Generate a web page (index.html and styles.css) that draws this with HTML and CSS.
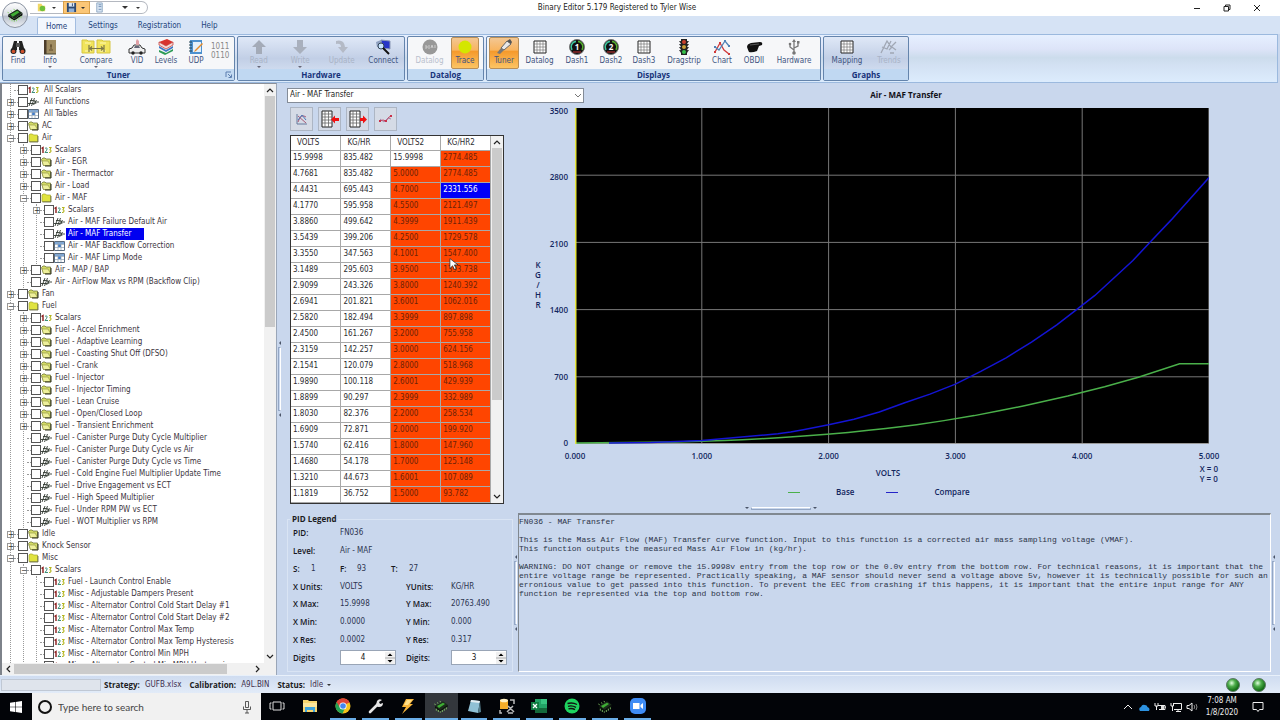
FILE: index.html
```html
<!DOCTYPE html>
<html lang="en">
<head>
<meta charset="utf-8">
<title>Binary Editor</title>
<link rel="stylesheet" href="styles.css">
</head>
<body>
<svg class="defs" aria-hidden="true">
  <defs>
    <linearGradient id="orbFill" x1="0" y1="0" x2="0" y2="1"><stop offset="0" stop-color="#fff"/><stop offset=".5" stop-color="#d9dde4"/><stop offset=".55" stop-color="#b9c0cc"/><stop offset="1" stop-color="#eef1f5"/></linearGradient>
    <radialGradient id="led" cx=".4" cy=".35" r=".6"><stop offset="0" stop-color="#e2ffe0"/><stop offset=".45" stop-color="#4fae4c"/><stop offset="1" stop-color="#0f6a12"/></radialGradient>
  </defs>
  <symbol id="num" viewBox="0 0 11 10"><path d="M.5 3.500L2 2.500v5.500" fill="none" stroke="#8c1c1c" stroke-width="1.4"/><path d="M4 3.500q1-1.500 2.200 0q0 1.500-2.200 4H7" fill="none" stroke="#3f8f7a"/><path d="M8 2.500h2L9 4.800q2.200 1-.2 2.700H8" fill="none" stroke="#b5b51e" stroke-width="1.100"/></symbol>
  <symbol id="fn" viewBox="0 0 11 10"><path d="M1 9L4 1M2 3.500h3M3.500 9l3-8M0 6.500h6M7 5h4M6 3l2 4M5.500 8l3-5" fill="none" stroke="#303830" stroke-width=".9"/></symbol>
  <symbol id="tab" viewBox="0 0 11 10"><path d="M.5.5h10v9H.5z" fill="#fff" stroke="#5a6c80"/><path d="M1 1h9v2H1z" fill="#7fa8d8"/><path d="M4 3h3v3H4z" fill="#3d7cd0"/><path d="M4 1v8M7 1v8M1 3.500h9M1 6.500h9" stroke="#91a3b5" stroke-width=".7"/></symbol>
  <symbol id="dir" viewBox="0 0 11 10"><path d="M.5 2.500L2 1h2l1 1h4.500v6.500h-7z" fill="#d4dc66" stroke="#71763a" stroke-width=".8"/><path d="M1 4h6l2.500 4.500h-7z" fill="#eef09a" stroke="#8c8f42" stroke-width=".6"/><path d="M10 3v6H4" fill="none" stroke="#2b2d18"/></symbol>
  <symbol id="dirx" viewBox="0 0 11 10"><path d="M1 2l1-1h2.500l1 1h4v6.500H1z" fill="#e0e340" stroke="#a5a72c" stroke-width=".7"/><path d="M1.500 9H10V3" fill="none" stroke="#4c4d20" stroke-width=".7"/></symbol>
  <symbol id="chip" viewBox="0 0 24 20"><path d="M3 10L15 3l7 5-11 8z" fill="#1b2e1b"/><path d="M3 10v3l8 5 11-7V8l-11 8z" fill="#0a120a"/><path d="M6 10l9-5 3 2-9 6z" fill="#3fae35"/><path d="M5 14v3m3-1v3m3-1v2m3-4v3m3-5v3m3-5v3M4 8l-2-1m6-1L6 5m6-1l-2-1" stroke="#8fd66d" stroke-width="1.200"/></symbol>
  <symbol id="grid" viewBox="0 0 18 18"><path d="M3 3h12v12H3z" fill="#fff" stroke="#222"/><path d="M6 3v12M9 3v12M12 3v12M3 6h12M3 9h12M3 12h12" stroke="#666" stroke-width=".6"/></symbol>
  <symbol id="dash" viewBox="0 0 18 18"><circle cx="9" cy="9" r="7.500" fill="#111" stroke="#777"/><path d="M4 12A5.500 5.500 0 0 1 8 3.500" fill="none" stroke="#3dc8a0" stroke-width="1.500"/><path d="M10 3.500A5.500 5.500 0 0 1 14 12" fill="none" stroke="#55b030" stroke-width="1.500"/><path d="M5 14h8" stroke="#c33"/></symbol>
  <symbol id="up" viewBox="0 0 8 6"><path d="M1 5l3-3 3 3" fill="none" stroke="#222" stroke-width="1.200"/></symbol>
  <symbol id="down" viewBox="0 0 8 6"><path d="M1 1l3 3 3-3" fill="none" stroke="#222" stroke-width="1.200"/></symbol>
</svg>

<header class="titlebar">
  <button class="orb" aria-label="Application menu"><svg viewBox="0 0 30 30"><circle cx="15" cy="15" r="12.500" fill="url(#orbFill)" stroke="#8a93a2"/><use href="#chip" x="6" y="7" width="18" height="15"/></svg></button>
  <div class="qat">
    <button aria-label="Open"><svg viewBox="0 0 12 12"><path d="M2 2h4l1 2h3v6H2z" fill="#f0d765"/><circle cx="7" cy="7" r="3" fill="#6fc03c"/></svg></button>
    <button class="drop" aria-label="Open options"></button>
    <span class="hot"><button aria-label="Save"><svg viewBox="0 0 12 12"><path d="M1 1h10v10H1z" fill="#2f4a72"/><path d="M3 1h6v4H3z" fill="#dce8f5"/><path d="M3 7h6v4H3z" fill="#8fb0d8"/><path d="M7 1.500v3" stroke="#2f4a72"/></svg></button><button class="drop" aria-label="Save options"></button></span>
    <button class="wide" aria-label="Write"><svg viewBox="0 0 12 12"><path d="M3 1h6v10H3z" fill="#d8e5f3" stroke="#8fa8c4"/><path d="M5 3h3M5 5h3M5 8h3" stroke="#6d8db5"/></svg></button>
    <button class="drop over" aria-label="Customize"></button>
    <button class="drop" aria-label="More"></button>
  </div>
  <h1 class="title">Binary Editor 5.179 Registered to Tyler Wise</h1>
  <div class="win">
    <button aria-label="Minimize"><svg viewBox="0 0 10 10"><path d="M2 5.500h6" stroke="#222"/></svg></button>
    <button aria-label="Restore"><svg viewBox="0 0 10 10"><path d="M2 3.500h4.500V8H2zM3.500 3.500V2H8v4.500H6.500" fill="none" stroke="#222"/></svg></button>
    <button aria-label="Close"><svg viewBox="0 0 10 10"><path d="M2 2l6 6M8 2l-6 6" stroke="#222"/></svg></button>
  </div>
</header>

<nav class="tabs">
  <button class="on">Home</button><button>Settings</button><button>Registration</button><button>Help</button>
</nav>

<div class="ribbon">
  <section class="group g-tuner">
    <div class="items">
      <button><svg viewBox="0 0 18 18"><path d="M3 10l2-7h3v9H2zM15 10l-2-7h-3v9h6z" fill="#222"/><path d="M7 5h4v4H7z" fill="#555"/><circle cx="4.500" cy="13" r="3" fill="#222"/><circle cx="13.500" cy="13" r="3" fill="#222"/><circle cx="4.500" cy="13.500" r="1.800" fill="#d0522c"/><circle cx="13.500" cy="13.500" r="1.800" fill="#d0522c"/></svg>Find</button>
      <button class="menu"><svg viewBox="0 0 18 18"><path d="M3 2h12v14H3z" fill="#a08c62"/><path d="M3 2h2.500v14H3z" fill="#4b3c2a"/><path d="M10 6v5M8 12h4M9 8h2" stroke="#5e4b2c"/><path d="M3 16h12" stroke="#443"/></svg>Info</button>
      <button class="menu"><svg class="big" viewBox="0 0 30 18"><path d="M1 2h5l1 1h6v12H1zM16 2h5l1 1h7v12H16z" fill="#f1e45c" stroke="#d6c643"/><path d="M4 5h6M19 5h6M4 13h6M19 13h6" stroke="#fff8b4"/><path d="M8 7v7M23 7v7M9 10.500h13M11 8.500l-2 2 2 2M20 8.500l2 2-2 2" fill="none" stroke="#7c7848" stroke-width="1.200"/></svg>Compare</button>
      <button><svg viewBox="0 0 18 18"><path d="M1 11l3-1 2-3h6l2 3 3 1v4H1z" fill="#eee" stroke="#333"/><path d="M6 10l1-2h4l1 2z" fill="#667"/><circle cx="5" cy="15" r="1.700" fill="#222"/><circle cx="13" cy="15" r="1.700" fill="#222"/><path d="M9 1l2 2v4H8V3z" fill="#e0a0a6"/></svg>VID</button>
      <button><svg viewBox="0 0 18 18"><path d="M2 4l8-3 6 3-7 4z" fill="#d8342e"/><path d="M2 4v3l7 4 7-4V4L9 8z" fill="#f4dcd8" stroke="#c22b28" stroke-width=".7"/><path d="M2 8v2l7 4 7-4V8l-7 4z" fill="#3d78c4"/><path d="M2 12v2l6 3 8-4v-2l-7 4z" fill="#2b9b56"/></svg>Levels</button>
      <button><svg viewBox="0 0 18 18"><path d="M3 2h12v14H3z" fill="#4d91cf"/><path d="M6 4h8v10H6z" fill="#e4f0fa"/><path d="M2 4h3M2 7h3M2 10h3M2 13h3" stroke="#245"/><path d="M15 5l-7 7-1 2 2-1 7-7z" fill="#e58b2a"/></svg>UDP</button>
      <span class="bits">1011<br>0110</span>
    </div>
    <h2>Tuner</h2><svg class="launch" viewBox="0 0 8 8"><path d="M1 6V1h5M3 3l3 3M6.500 3.500v3h-3" fill="none" stroke="#5d7fb0"/></svg>
  </section>
  <section class="group g-hw blue">
    <div class="items">
      <button class="menu" disabled><svg viewBox="0 0 18 18"><path d="M9 2l7 7h-4v7H6V9H2z" fill="#a4abb8"/></svg>Read</button>
      <button class="menu" disabled><svg viewBox="0 0 18 18"><path d="M9 16l7-7h-4V2H6v7H2z" fill="#a9b0bd"/></svg>Write</button>
      <button disabled><svg viewBox="0 0 18 18"><path d="M3 3q8-2 9 6h3l-5 6-5-6h3q0-4-5-3z" fill="#b4bac6"/></svg>Update</button>
      <button><svg viewBox="0 0 18 18"><path d="M7 2l9 1v8l-8-1z" fill="#2736c8" stroke="#8997b5"/><path d="M2 4l5-2v8l-4-1z" fill="#8ea0c0"/><circle cx="7" cy="8" r="3" fill="#c7e3ff" stroke="#345"/><path d="M9 10l6 6" stroke="#111" stroke-width="2"/></svg>Connect</button>
    </div>
    <h2>Hardware</h2>
  </section>
  <section class="group g-log">
    <div class="items">
      <button disabled><svg viewBox="0 0 18 18"><circle cx="9" cy="9" r="7.500" fill="#989898"/><path d="M4 8h2v2H4m4-3v4m2-1l1-3 1 3m2-3v3" fill="none" stroke="#ccc"/></svg>Datalog</button>
      <button class="on"><svg viewBox="0 0 18 18"><circle cx="9" cy="9" r="6.500" fill="#d4e600"/></svg>Trace</button>
    </div>
    <h2>Datalog</h2>
  </section>
  <section class="group g-disp">
    <div class="items">
      <button class="on"><svg viewBox="0 0 18 18"><path d="M2 15l4-5 3 2-4 4z" fill="#777"/><path d="M6 10l6-7 4 3-7 6z" fill="#e8e8e8" stroke="#666"/><path d="M12 3l3-2 2 3-1 2z" fill="#555"/></svg>Tuner</button>
      <button><svg><use href="#grid"/></svg>Datalog</button>
      <button><svg viewBox="0 0 18 18"><use href="#dash"/><text x="9" y="12" class="digit">1</text></svg>Dash1</button>
      <button><svg viewBox="0 0 18 18"><use href="#dash"/><text x="9" y="12" class="digit">2</text></svg>Dash2</button>
      <button><svg><use href="#grid"/></svg>Dash3</button>
      <button><svg viewBox="0 0 18 18"><path d="M4 3h10l-2 3h2l-2 3h2l-2 3h2l-2 3H6l-2-3h2L4 9h2L4 6h2z" fill="#333"/><path d="M6 1h6v16H6z" fill="#222"/><circle cx="9" cy="4" r="2" fill="#c8402c"/><circle cx="9" cy="9" r="2" fill="#c9a13a"/><circle cx="9" cy="14" r="2" fill="#35c048"/></svg>Dragstrip</button>
      <button><svg viewBox="0 0 18 18"><path d="M2 14L7 5l4 7 5 4" fill="none" stroke="#d03a3a" stroke-width="1.300"/><path d="M2 9l4 3 6-9 4 5" fill="none" stroke="#4f83b8" stroke-width="1.300"/><path d="M1 8h2v2H1zM11 2h2v2h-2zM15 7h2v2h-2z" fill="#4f83b8"/><path d="M6 4h2v2H6zM1 13h2v2H1zM15 15h2v2h-2z" fill="#d03a3a"/></svg>Chart</button>
      <button><svg viewBox="0 0 18 18"><path d="M2 9q0-3 4-4l9-1q3 0 2 3l-3 1-2 5q-5 2-8 1-1-2-2-5z" fill="#111"/><path d="M5 7l9-1" stroke="#555"/></svg>OBDII</button>
      <button><svg viewBox="0 0 18 18"><path d="M9 3v12M9 12L5 9V6M9 10l4-2V5" fill="none" stroke="#777" stroke-width="1.300"/><path d="M9 1L7 4h4z" fill="#777"/><circle cx="9" cy="15" r="1.800" fill="#777"/><path d="M12 3h2.500v2.500H12z" fill="#777"/><circle cx="5" cy="6" r="1.300" fill="#777"/></svg>Hardware</button>
    </div>
    <h2>Displays</h2>
  </section>
  <section class="group g-graph blue">
    <div class="items">
      <button><svg><use href="#grid"/></svg>Mapping</button>
      <button disabled><svg viewBox="0 0 18 18"><path d="M1 15L7 3l4 6 5-5M2 9l5 2 4-8M9 12l3-3 4 3M10 15h4" fill="none" stroke="#a0a7b4" stroke-width="1.300"/></svg>Trends</button>
    </div>
    <h2>Graphs</h2>
  </section>
</div>

<main class="main">
  <aside class="side">
    <div class="treewrap">
      <ul class="tree">
        <li><div class="row root"><i></i><label><input type="checkbox"><svg><use href="#num"/></svg><span>All Scalars</span></label></div></li>
        <li><div class="row root"><button>+</button><label><input type="checkbox"><svg><use href="#fn"/></svg><span>All Functions</span></label></div></li>
        <li><div class="row root"><button>+</button><label><input type="checkbox"><svg><use href="#tab"/></svg><span>All Tables</span></label></div></li>
        <li><div class="row"><button>+</button><label><input type="checkbox"><svg><use href="#dir"/></svg><span>AC</span></label></div></li>
        <li><div class="row"><button>−</button><label><input type="checkbox"><svg><use href="#dirx"/></svg><span>Air</span></label></div>
          <ul>
            <li><div class="row"><button>+</button><label><input type="checkbox"><svg><use href="#num"/></svg><span>Scalars</span></label></div></li>
            <li><div class="row"><button>+</button><label><input type="checkbox"><svg><use href="#dir"/></svg><span>Air - EGR</span></label></div></li>
            <li><div class="row"><button>+</button><label><input type="checkbox"><svg><use href="#dir"/></svg><span>Air - Thermactor</span></label></div></li>
            <li><div class="row"><button>+</button><label><input type="checkbox"><svg><use href="#dir"/></svg><span>Air - Load</span></label></div></li>
            <li><div class="row"><button>−</button><label><input type="checkbox"><svg><use href="#dirx"/></svg><span>Air - MAF</span></label></div>
              <ul>
                <li><div class="row"><button>+</button><label><input type="checkbox"><svg><use href="#num"/></svg><span>Scalars</span></label></div></li>
                <li><div class="row"><i></i><label><input type="checkbox"><svg><use href="#fn"/></svg><span>Air - MAF Failure Default Air</span></label></div></li>
                <li><div class="row sel"><i></i><label><input type="checkbox"><svg><use href="#fn"/></svg><span>Air - MAF Transfer</span></label></div></li>
                <li><div class="row"><i></i><label><input type="checkbox"><svg><use href="#tab"/></svg><span>Air - MAF Backflow Correction</span></label></div></li>
                <li><div class="row"><i></i><label><input type="checkbox"><svg><use href="#tab"/></svg><span>Air - MAF Limp Mode</span></label></div></li>
              </ul>
            </li>
            <li><div class="row"><button>+</button><label><input type="checkbox"><svg><use href="#dir"/></svg><span>Air - MAP / BAP</span></label></div></li>
            <li><div class="row"><i></i><label><input type="checkbox"><svg><use href="#fn"/></svg><span>Air - AirFlow Max vs RPM (Backflow Clip)</span></label></div></li>
          </ul>
        </li>
        <li><div class="row"><button>+</button><label><input type="checkbox"><svg><use href="#dir"/></svg><span>Fan</span></label></div></li>
        <li><div class="row"><button>−</button><label><input type="checkbox"><svg><use href="#dirx"/></svg><span>Fuel</span></label></div>
          <ul>
            <li><div class="row"><button>+</button><label><input type="checkbox"><svg><use href="#num"/></svg><span>Scalars</span></label></div></li>
            <li><div class="row"><button>+</button><label><input type="checkbox"><svg><use href="#dir"/></svg><span>Fuel - Accel Enrichment</span></label></div></li>
            <li><div class="row"><button>+</button><label><input type="checkbox"><svg><use href="#dir"/></svg><span>Fuel - Adaptive Learning</span></label></div></li>
            <li><div class="row"><button>+</button><label><input type="checkbox"><svg><use href="#dir"/></svg><span>Fuel - Coasting Shut Off (DFSO)</span></label></div></li>
            <li><div class="row"><button>+</button><label><input type="checkbox"><svg><use href="#dir"/></svg><span>Fuel - Crank</span></label></div></li>
            <li><div class="row"><button>+</button><label><input type="checkbox"><svg><use href="#dir"/></svg><span>Fuel - Injector</span></label></div></li>
            <li><div class="row"><button>+</button><label><input type="checkbox"><svg><use href="#dir"/></svg><span>Fuel - Injector Timing</span></label></div></li>
            <li><div class="row"><button>+</button><label><input type="checkbox"><svg><use href="#dir"/></svg><span>Fuel - Lean Cruise</span></label></div></li>
            <li><div class="row"><button>+</button><label><input type="checkbox"><svg><use href="#dir"/></svg><span>Fuel - Open/Closed Loop</span></label></div></li>
            <li><div class="row"><button>+</button><label><input type="checkbox"><svg><use href="#dir"/></svg><span>Fuel - Transient Enrichment</span></label></div></li>
            <li><div class="row"><i></i><label><input type="checkbox"><svg><use href="#fn"/></svg><span>Fuel - Canister Purge Duty Cycle Multiplier</span></label></div></li>
            <li><div class="row"><i></i><label><input type="checkbox"><svg><use href="#fn"/></svg><span>Fuel - Canister Purge Duty Cycle vs Air</span></label></div></li>
            <li><div class="row"><i></i><label><input type="checkbox"><svg><use href="#fn"/></svg><span>Fuel - Canister Purge Duty Cycle vs Time</span></label></div></li>
            <li><div class="row"><i></i><label><input type="checkbox"><svg><use href="#fn"/></svg><span>Fuel - Cold Engine Fuel Multiplier Update Time</span></label></div></li>
            <li><div class="row"><i></i><label><input type="checkbox"><svg><use href="#fn"/></svg><span>Fuel - Drive Engagement vs ECT</span></label></div></li>
            <li><div class="row"><i></i><label><input type="checkbox"><svg><use href="#fn"/></svg><span>Fuel - High Speed Multiplier</span></label></div></li>
            <li><div class="row"><i></i><label><input type="checkbox"><svg><use href="#fn"/></svg><span>Fuel - Under RPM PW vs ECT</span></label></div></li>
            <li><div class="row"><i></i><label><input type="checkbox"><svg><use href="#fn"/></svg><span>Fuel - WOT Multiplier vs RPM</span></label></div></li>
          </ul>
        </li>
        <li><div class="row"><button>+</button><label><input type="checkbox"><svg><use href="#dir"/></svg><span>Idle</span></label></div></li>
        <li><div class="row"><button>+</button><label><input type="checkbox"><svg><use href="#dir"/></svg><span>Knock Sensor</span></label></div></li>
        <li><div class="row"><button>−</button><label><input type="checkbox"><svg><use href="#dirx"/></svg><span>Misc</span></label></div>
          <ul>
            <li><div class="row"><button>−</button><label><input type="checkbox"><svg><use href="#num"/></svg><span>Scalars</span></label></div>
              <ul>
                <li><div class="row"><i></i><label><input type="checkbox"><svg><use href="#num"/></svg><span>Fuel - Launch Control Enable</span></label></div></li>
                <li><div class="row"><i></i><label><input type="checkbox"><svg><use href="#num"/></svg><span>Misc - Adjustable Dampers Present</span></label></div></li>
                <li><div class="row"><i></i><label><input type="checkbox"><svg><use href="#num"/></svg><span>Misc - Alternator Control Cold Start Delay #1</span></label></div></li>
                <li><div class="row"><i></i><label><input type="checkbox"><svg><use href="#num"/></svg><span>Misc - Alternator Control Cold Start Delay #2</span></label></div></li>
                <li><div class="row"><i></i><label><input type="checkbox"><svg><use href="#num"/></svg><span>Misc - Alternator Control Max Temp</span></label></div></li>
                <li><div class="row"><i></i><label><input type="checkbox"><svg><use href="#num"/></svg><span>Misc - Alternator Control Max Temp Hysteresis</span></label></div></li>
                <li><div class="row"><i></i><label><input type="checkbox"><svg><use href="#num"/></svg><span>Misc - Alternator Control Min MPH</span></label></div></li>
                <li><div class="row"><i></i><label><input type="checkbox"><svg><use href="#num"/></svg><span>Misc - Alternator Control Min MPH Hysteresis</span></label></div></li>
              </ul>
            </li>
          </ul>
        </li>
      </ul>
      <div class="vbar"><svg><use href="#up"/></svg><b></b><svg class="end"><use href="#down"/></svg></div>
    </div>
    <div class="hbar"><svg viewBox="0 0 6 8"><path d="M5 1L2 4l3 3" fill="none" stroke="#222" stroke-width="1.200"/></svg><b></b><svg viewBox="0 0 6 8"><path d="M1 1l3 3-3 3" fill="none" stroke="#222" stroke-width="1.200"/></svg></div>
  </aside>
  <div class="split v"><span></span></div>

  <div class="content">
    <div class="upper">
      <div class="headline">
        <div class="combo"><select aria-label="Function"><option>Air - MAF Transfer</option></select><svg viewBox="0 0 8 6"><path d="M1 1l3 3 3-3" fill="none" stroke="#777"/></svg></div>
        <h3>Air - MAF Transfer</h3>
      </div>
      <div class="work">
        <div class="editor">
          <div class="tools">
            <button aria-label="Graph"><svg viewBox="0 0 20 18"><path d="M5 4v10h10" fill="none" stroke="#667a9c"/><path d="M6 12q3-9 8-5M6 6l8 7" fill="none" stroke="#a75a76"/><path d="M6 10l4-5 4 5" fill="none" stroke="#4c78b8"/></svg></button>
            <button aria-label="Import column"><svg viewBox="0 0 20 18"><path d="M2 1h10v16H2z" fill="#fff" stroke="#222"/><path d="M5 1v16M8.500 1v16M2 4h10M2 7h10M2 10h10M2 13h10" stroke="#666" stroke-width=".8"/><path d="M11 9.500l4-4v2.500h4v3h-4v2.500z" fill="#f01010"/></svg></button>
            <button aria-label="Export column"><svg viewBox="0 0 20 18"><path d="M2 1h10v16H2z" fill="#fff" stroke="#222"/><path d="M5 1v16M8.500 1v16M2 4h10M2 7h10M2 10h10M2 13h10" stroke="#666" stroke-width=".8"/><path d="M19 9.500l-4-4v2.500h-3v3h3v2.500z" fill="#f01010"/></svg></button>
            <button aria-label="Smooth"><svg viewBox="0 0 20 18"><path d="M4 11l3-1 3 1 3-4 3-1" fill="none" stroke="#c9405c"/><path d="M4 9l4 3 4-4 3 1" fill="none" stroke="#a06a90" stroke-width=".8"/><path d="M3 10h2v2H3zM9 10h2v2H9zM14 5h2v2h-2z" fill="#c9304a"/></svg></button>
          </div>
          <div class="sheet">
            <table>
              <thead><tr><th>VOLTS</th><th>KG/HR</th><th>VOLTS2</th><th>KG/HR2</th></tr></thead>
              <tbody>
                <tr><td>15.9998</td><td>835.482</td><td>15.9998</td><td class="d">2774.485</td></tr>
                <tr><td>4.7681</td><td>835.482</td><td class="d">5.0000</td><td class="d">2774.485</td></tr>
                <tr><td>4.4431</td><td>695.443</td><td class="d">4.7000</td><td class="cur">2331.556</td></tr>
                <tr><td>4.1770</td><td>595.958</td><td class="d">4.5500</td><td class="d">2121.497</td></tr>
                <tr><td>3.8860</td><td>499.642</td><td class="d">4.3999</td><td class="d">1911.439</td></tr>
                <tr><td>3.5439</td><td>399.206</td><td class="d">4.2500</td><td class="d">1729.578</td></tr>
                <tr><td>3.3550</td><td>347.563</td><td class="d">4.1001</td><td class="d">1547.400</td></tr>
                <tr><td>3.1489</td><td>295.603</td><td class="d">3.9500</td><td class="d">1393.738</td></tr>
                <tr><td>2.9099</td><td>243.326</td><td class="d">3.8000</td><td class="d">1240.392</td></tr>
                <tr><td>2.6941</td><td>201.821</td><td class="d">3.6001</td><td class="d">1062.016</td></tr>
                <tr><td>2.5820</td><td>182.494</td><td class="d">3.3999</td><td class="d">897.898</td></tr>
                <tr><td>2.4500</td><td>161.267</td><td class="d">3.2000</td><td class="d">755.958</td></tr>
                <tr><td>2.3159</td><td>142.257</td><td class="d">3.0000</td><td class="d">624.156</td></tr>
                <tr><td>2.1541</td><td>120.079</td><td class="d">2.8000</td><td class="d">518.968</td></tr>
                <tr><td>1.9890</td><td>100.118</td><td class="d">2.6001</td><td class="d">429.939</td></tr>
                <tr><td>1.8899</td><td>90.297</td><td class="d">2.3999</td><td class="d">332.989</td></tr>
                <tr><td>1.8030</td><td>82.376</td><td class="d">2.2000</td><td class="d">258.534</td></tr>
                <tr><td>1.6909</td><td>72.871</td><td class="d">2.0000</td><td class="d">199.920</td></tr>
                <tr><td>1.5740</td><td>62.416</td><td class="d">1.8000</td><td class="d">147.960</td></tr>
                <tr><td>1.4680</td><td>54.178</td><td class="d">1.7000</td><td class="d">125.148</td></tr>
                <tr><td>1.3210</td><td>44.673</td><td class="d">1.6001</td><td class="d">107.089</td></tr>
                <tr><td>1.1819</td><td>36.752</td><td class="d">1.5000</td><td class="d">93.782</td></tr>
              </tbody>
            </table>
            <div class="vbar"><svg><use href="#up"/></svg><b></b><svg class="end"><use href="#down"/></svg></div>
            <svg class="pointer" viewBox="0 0 10 14"><path d="M1 1v11l3-3 2 4 2-1-2-4h4z" fill="#fff" stroke="#222" stroke-width=".8"/></svg>
          </div>
        </div>
        <div class="chart">
          <div class="ytitle">K<br>G<br>/<br>H<br>R</div>
          <div class="yaxis"><span>3500</span><span>2800</span><span>2100</span><span>1400</span><span>700</span><span>0</span></div>
          <svg class="plot" viewBox="0 0 634 335" preserveAspectRatio="none">
            <path class="gridline" d="M126.800 0v335M253.600 0v335M380.400 0v335M507.200 0v335M0 67h634M0 134h634M0 201h634M0 268h634"/>
            <path class="frame" d="M634 0v335M0 334.500h634"/>
            <path class="base" d="M0 334L100 333L150 331.500L167.500 330.700L186 329.800L199.600 329L214.400 328L228.600 327.100L252.200 325.400L273.100 323.500L293.600 321.400L310.700 319.600L327.400 317.500L341.600 315.700L369 311.700L399.300 306.700L425.400 301.700L449.400 296.800L492.700 287.200L529.600 278L563.400 268.400L604.600 255L634 255"/>
            <path class="compare" d="M34 334L76 333.500L127 331.500L190.200 326L202.900 324.800L215.600 323L228.200 320.800L253.600 315.900L279 310.300L304.300 303.100L329.700 293.800L355 285.300L380.400 275.300L405.800 262.600L431.100 249.100L456.500 233.400L481.800 216.300L500.900 201.600L519.900 186.900L538.900 169.500L557.900 152L576.900 131.900L596 111.800L634 69.400"/>
            <path class="yedge" d="M.5 0v335"/>
          </svg>
          <div class="xaxis"><span>0.000</span><span>1.000</span><span>2.000</span><span>3.000</span><span>4.000</span><span>5.000</span></div>
          <div class="foot">
            <div class="xtitle">VOLTS</div>
            <div class="readout">X = 0<br>Y = 0</div>
          </div>
          <div class="legend"><i class="k1"></i><span>Base</span><i class="k2"></i><span>Compare</span></div>
        </div>
      </div>
      <div class="split h"><span></span></div>
    </div>

    <div class="lower">
      <fieldset class="pid">
        <legend>PID Legend</legend>
        <div class="line"><b>PID:</b><span>FN036</span></div>
        <div class="line"><b>Level:</b><span>Air - MAF</span></div>
        <div class="line six"><b>S:</b><span>1</span><b>F:</b><span>93</span><b>T:</b><span>27</span></div>
        <div class="line four"><b>X Units:</b><span>VOLTS</span><b>YUnits:</b><span>KG/HR</span></div>
        <div class="line four"><b>X Max:</b><span>15.9998</span><b>Y Max:</b><span>20763.490</span></div>
        <div class="line four"><b>X Min:</b><span>0.0000</span><b>Y Min:</b><span>0.000</span></div>
        <div class="line four"><b>X Res:</b><span>0.0002</span><b>Y Res:</b><span>0.317</span></div>
        <div class="line four"><label for="xd">Digits</label><div class="spin"><input id="xd" value="4"><button aria-label="Change X digits"><svg viewBox="0 0 10 12"><path d="M5 1.500L7.500 4h-5zM5 10.500L7.500 8h-5z"/><path d="M0 6h10" stroke="#aaa"/></svg></button></div><label for="yd">Digits:</label><div class="spin"><input id="yd" value="3"><button aria-label="Change Y digits"><svg viewBox="0 0 10 12"><path d="M5 1.500L7.500 4h-5zM5 10.500L7.500 8h-5z"/><path d="M0 6h10" stroke="#aaa"/></svg></button></div></div>
      </fieldset>
      <div class="split v"><span></span></div>
      <textarea readonly aria-label="Description">FN036 - MAF Transfer

This is the Mass Air Flow (MAF) Transfer curve function. Input to this function is a corrected air mass sampling voltage (VMAF).
This function outputs the measured Mass Air Flow in (kg/hr).

WARNING: DO NOT change or remove the 15.9998v entry from the top row or the 0.0v entry from the bottom row. For technical reasons, it is important that the entire voltage range be represented. Practically speaking, a MAF sensor should never send a voltage above 5v, however it is technically possible for such an erronious value to get passed into this function. To prevent the EEC from crashing if this happens, it is important that the entire input range for ANY function be represented via the top and bottom row.</textarea>
      <div class="split v"><span></span></div>
    </div>
  </div>
</main>

<footer class="status">
  <div class="progress"></div>
  <b>Strategy:</b><span>GUFB.xlsx</span><b>Calibration:</b><span>A9L.BIN</span><b>Status:</b><button>Idle</button>
  <div class="leds"><svg viewBox="0 0 16 16"><circle cx="8" cy="8" r="6.500" fill="url(#led)" stroke="#5f7a68"/></svg><svg viewBox="0 0 16 16"><circle cx="8" cy="8" r="6.500" fill="url(#led)" stroke="#5f7a68"/></svg></div>
</footer>

<div class="taskbar">
  <button class="start" aria-label="Start"><svg viewBox="0 0 12 12"><path d="M0 1.800l5-.8v4.700H0zM5.600.9L12 0v5.700H5.600zM0 6.300h5V11l-5-.8zM5.600 6.300H12V12l-6.400-.9z" fill="#fff"/></svg></button>
  <div class="search">
    <svg viewBox="0 0 16 16"><circle cx="8" cy="8" r="6" fill="none" stroke="#111" stroke-width="2"/></svg>
    <input placeholder="Type here to search" aria-label="Search">
    <svg viewBox="0 0 16 16"><path d="M6.500 2.500h3v6h-3zM4.500 7.500v3h7v-3M8 11v3M6 14h4" fill="none" stroke="#333" stroke-width=".8"/></svg>
  </div>
  <div class="apps">
    <button aria-label="Task view"><svg viewBox="0 0 16 16"><path d="M4 4h8v8H4zM2.500 5H1v6h1.500M13.500 5H15v6h-1.500" fill="none" stroke="#ddd"/></svg></button>
    <button aria-label="File Explorer"><svg viewBox="0 0 16 16"><path d="M1 2h5l1 1h8v11H1z" fill="#f6d56f"/><path d="M1 5h14v4H1z" fill="#fbe69c"/><path d="M3 9h10v5H11v-2H5v2H3z" fill="#3fa4dc"/></svg></button>
    <button class="run" aria-label="Chrome"><svg viewBox="0 0 16 16"><circle cx="8" cy="8" r="7.500" fill="#f4c21c"/><path d="M8 8L1.500 4.200A7.500 7.500 0 0 1 14.500 4.200z" fill="#de4437"/><path d="M8 8L1.500 4.200A7.500 7.500 0 0 0 7.500 15.500L10 10z" fill="#23a455"/><path d="M8 4.500h6.600a7.500 7.500 0 0 0-13-.5L4.500 9z" fill="#de4437"/><circle cx="8" cy="8" r="3.600" fill="#fff"/><circle cx="8" cy="8" r="2.800" fill="#4385f0"/></svg></button>
    <button class="run" aria-label="Wrench"><svg viewBox="0 0 16 16"><path d="M2 14L10 6" stroke="#e6e6e6" stroke-width="2.600" stroke-linecap="round"/><path d="M9 3q2-3 5-1l-3 2 1 2 3-1q0 4-4 4T9 3z" fill="#e6e6e6"/></svg></button>
    <button class="run" aria-label="Bolt"><svg viewBox="0 0 16 16"><path d="M6 1h8l-4 5h3L2 16l4-7H2z" fill="#f8b63a"/><path d="M7 2h5L8 7H4z" fill="#ffe08a"/></svg></button>
    <button class="run active" aria-label="Binary Editor"><svg><use href="#chip"/></svg></button>
    <button class="run" aria-label="Notepad"><svg viewBox="0 0 16 16"><path d="M5 2l9 1-2 12-10-2z" fill="#8fc0d4"/><path d="M5 2l9 1-.5 2-9-1z" fill="#e4eef2"/><path d="M14 3l1 11-3 1z" fill="#56808f"/></svg></button>
    <button class="run" aria-label="Database"><svg viewBox="0 0 16 16"><path d="M1 2h8v9H1z" fill="#f5ad28"/><ellipse cx="5" cy="2.500" rx="4" ry="1.800" fill="#fff0c0"/><path d="M11 2h4v4M3 15h-2v-3M9 8l6 6M14 8l-6 6M9 15h5" fill="none" stroke="#bbb" stroke-width="1.500"/></svg></button>
    <button class="run" aria-label="Excel"><svg viewBox="0 0 16 16"><path d="M4 1h12v14H4z" fill="#22a366"/><path d="M10 1h6v5h-6z" fill="#38c481"/><path d="M10 10h6v5H4v-5z" fill="#14693b"/><path d="M0 4h8v8H0z" fill="#107c41"/><path d="M2 6l4 4M6 6l-4 4" stroke="#fff" stroke-width="1.300"/></svg></button>
    <button class="run" aria-label="Spotify"><svg viewBox="0 0 16 16"><circle cx="8" cy="8" r="7.500" fill="#1ed45f"/><path d="M3.500 5.500q5-1.500 9.500 1M4 8.300q4-1.200 8 1M4.500 10.800q3.500-1 6.500.8" fill="none" stroke="#111" stroke-width="1.400"/></svg></button>
    <button class="run" aria-label="Binary Editor 2"><svg><use href="#chip"/></svg></button>
    <button class="run" aria-label="Zoom"><svg viewBox="0 0 16 16"><rect width="16" height="16" rx="5" fill="#3f8cf5"/><path d="M3 5h6.500v6H3zM10.500 7L13 5v6l-2.500-2z" fill="#fff"/></svg></button>
  </div>
  <div class="tray">
    <svg viewBox="0 0 12 12"><path d="M2 8l4-4 4 4" fill="none" stroke="#eee"/></svg>
    <svg viewBox="0 0 12 12"><path d="M2 10q-2-3 1-4 1-3 4-2 2 0 2.500 2 3 1 1.500 4z" fill="#2c92e0"/></svg>
    <svg viewBox="0 0 12 12"><path d="M4 4.500h7v4H5M11 6h1v1M1 2v3h3V2M2.500 5v4" fill="none" stroke="#eee"/><path d="M7 5h3v3H7z" fill="#ddd"/></svg>
    <svg viewBox="0 0 12 12"><path d="M4 2.500h7.500v6H4M6 10.500h5M8 8.500v2M1 2v3h2.500V2M2.500 5v5" fill="none" stroke="#eee"/></svg>
    <svg viewBox="0 0 12 12"><path d="M1 4.500h2L6 2v8L3 7.500H1z" fill="none" stroke="#eee"/><path d="M8 4q1.500 2 0 4M10 3q2 3 0 6" fill="none" stroke="#888"/></svg>
    <time>7:08 AM<br>1/8/2020</time>
    <svg viewBox="0 0 12 12"><path d="M1 1.500h10v7H7.500L6 10.500 4.500 8.500H1z" fill="none" stroke="#eee"/></svg>
  </div>
</div>
</body>
</html>
```
FILE: styles.css
```css
* { box-sizing: border-box; }
body {
  margin: 0; height: 100vh; display: flex; flex-direction: column; overflow: hidden;
  background: #c9d7ed; color: #1c1c22;
  font: 8px/12px "DejaVu Sans Condensed", "Open Sans", sans-serif;
}
button, input, select, textarea { font: inherit; color: inherit; margin: 0; padding: 0; }
button { background: none; border: 0; }
h1, h2, h3, ul { margin: 0; padding: 0; font-size: inherit; list-style: none; }
svg { display: block; flex: none; }
.defs { position: absolute; width: 0; height: 0; }
h2, h3, .line b, .line label, .pid legend, .status b, .chart { font-family: "Open Sans", sans-serif; }

/* title bar */
.titlebar { position: relative; height: 16px; flex: none; display: flex; align-items: center; background: #fff; }
.orb { position: absolute; left: 0; top: 0; z-index: 2; }
.orb svg { width: 30px; height: 30px; }
.qat { position: absolute; left: 30px; top: 1px; width: 118px; height: 13px; padding-left: 6px; display: flex; align-items: center; border: 1px solid #b4b8c0; border-left: 0; border-radius: 0 7px 7px 0; }
.qat svg { width: 11px; height: 11px; }
.qat .drop { width: 13px; height: 11px; }
.qat .drop::after, .status button::after { content: ""; display: block; width: 0; margin: 0 auto; border: 2px solid transparent; border-top-color: #333; border-bottom: 0; }
.qat .over::after { border-width: 3px 3px 0; }
.qat .hot { display: flex; align-items: center; height: 13px; width: 27px; margin: 0 4px 0 3px; padding-left: 2px; background: #fbc676; border: 1px solid #d8a04c; }
.qat .wide { width: 24px; }
.title { flex: 1; text-align: center; font-weight: 400; padding-left: 14px; margin-right: -28px; }
.win { display: flex; gap: 20px; padding-right: 12px; width: 88px; }
.win svg { width: 10px; height: 10px; }

/* tabs */
.tabs { height: 18px; flex: none; display: flex; gap: 4px; padding: 1px 0 0 37px; background: #d6e3f5; color: #23437c; line-height: 16px; }
.tabs button { padding: 0 8px; }
.tabs .on { background: #f3f7fd; border: 1px solid #a3bde0; border-bottom: 0; border-radius: 2px 2px 0 0; line-height: 15px; }

/* ribbon */
.ribbon { height: 49px; flex: none; display: flex; gap: 2px; padding: 1px 2px; margin-right: 2px; border: 1px solid #9bb9de; border-width: 1px 1px 1px 0; background: linear-gradient(#e6f0ff, #dde4f8 30%, #ccdcec 48%, #d3e1f3 65%, #dcecfd); }
.group { position: relative; display: flex; flex-direction: column; border: 1px solid #6484ac; border-radius: 2px; background: #f6f7f9; color: #3f5580; }
.group h2 { background: #c3daf2; color: #17337a; text-align: center; font-size: 8px; line-height: 11px; }
.items { flex: 1; display: grid; }
.items button { display: flex; flex-direction: column; align-items: center; padding-top: 1px; line-height: 10px; }
.items svg { width: 18px; height: 18px; }
.items .big { width: 30px; }
.items button:disabled { color: #b9c0cd; }
.items .menu::after { content: ""; border: 2px solid transparent; border-top-color: #667; border-bottom: 0; }
.items .on { background: linear-gradient(#f3c793, #f8b45f 40%, #f59a2c 45%, #fcc464); border: 1px solid #b98f58; border-radius: 2px; padding-top: 0; }
.blue { background: linear-gradient(#dfe8f7, #c2cfe6 50%, #dbe6f6); }
.blue h2 { background: #c0d8f2; }
.blue .items button:disabled { color: #a9b3c6; }
.bits { line-height: 9px; color: #888; padding: 5px 0 0 2px; }
.digit { font: bold 8px "Open Sans", sans-serif; fill: #fff; text-anchor: middle; }
.launch { position: absolute; right: 1px; bottom: 1px; width: 8px; height: 8px; }
.g-tuner { width: 233px; } .g-tuner .items { grid-template-columns: 30px 34px 58px 24px 34px 26px 24px; }
.g-hw { width: 168px; } .g-hw .items { grid-template-columns: repeat(4, 1fr); }
.g-log { width: 77px; } .g-log .items { grid-template-columns: 43px 28px; }
.g-disp { width: 335px; } .g-disp .items { grid-template-columns: 30px 41px 34px 34px 32px 48px 28px 36px 44px; padding-left: 2px; }
.g-graph { width: 86px; } .g-graph .items { grid-template-columns: 46px 38px; }

/* work area */
.main { flex: 1; min-height: 0; display: flex; padding-right: 4px; }
.side { width: 277px; flex: none; display: flex; flex-direction: column; background: #fff; border-left: 2px solid #7d828a; border-right: 1px solid #9aa6b8; border-top: 1px solid #8a8f98; }
.treewrap { flex: 1; min-height: 0; display: flex; overflow: hidden; }
.tree { flex: 1; min-width: 0; margin-left: 8px; }
.tree ul, .tree { border-left: 1px dotted #9a9a9a; }
.tree ul { margin-left: 12px; }
.row { height: 12px; display: flex; align-items: center; white-space: nowrap; color: #3c3540; }
.row button { width: 7px; height: 7px; margin-left: -4px; border: 1px solid #999; background: #fff; font-size: 8px; line-height: 5px; color: #333; flex: none; }
.row i { width: 3px; height: 7px; flex: none; }
.row label { display: flex; align-items: center; height: 12px; }
.row label::before { content: ""; width: 4px; border-top: 1px dotted #9a9a9a; }
.row input { appearance: none; width: 10px; height: 10px; border: 1px solid #555; background: #fff; }
.row svg { width: 11px; height: 10px; }
.row span { padding: 0 3px; line-height: 12px; }
.row.root span { padding-left: 5px; }
.row.sel span { background: #0000f0; color: #fff; padding: 0 13px 0 2px; margin-left: 1px; }
.vbar { width: 12px; flex: none; display: flex; flex-direction: column; align-items: center; background: #f1f1f1; }
.vbar svg { width: 8px; height: 6px; margin: 3px 0; }
.vbar b { width: 10px; height: 231px; background: #cbcbcb; }
.vbar .end { margin-top: auto; }
.hbar { height: 12px; flex: none; display: flex; align-items: center; padding: 0 15px 0 3px; background: #f1f1f1; }
.hbar svg { width: 6px; height: 8px; }
.hbar b { width: 213px; height: 10px; margin: 0 auto 0 3px; background: #cbcbcb; }
.split { flex: none; display: flex; align-items: center; justify-content: center; gap: 2px; }
.split::before, .split::after { content: ""; border: 2px solid transparent; }
.split.v { width: 5px; flex-direction: column; }
.split.v::before, .split.v::after { border-right-color: #4a5468; border-left: 0; }
.split.v span { width: 3px; height: 64px; border: 1px solid #93a6c4; border-right-color: #fff; border-radius: 1px; }
.split.h { height: 10px; padding-right: 2px; }
.split.h::before, .split.h::after { border-top-color: #4a5468; border-bottom: 0; }
.split.h span { width: 60px; height: 3px; border: 1px solid #93a6c4; border-top-color: #fff; border-radius: 1px; }

.content { flex: 1; min-width: 0; display: flex; flex-direction: column; padding: 4px 0 3px 5px; }
.upper { flex: 1; display: flex; flex-direction: column; min-height: 0; }
.headline { display: flex; align-items: center; height: 16px; flex: none; }
.combo { position: relative; width: 297px; }
.combo select { display: block; appearance: none; width: 100%; height: 15px; padding-left: 2px; border: 1px solid #848c98; background: #fff; border-radius: 0; }
.combo svg { position: absolute; right: 2px; top: 5px; width: 8px; height: 6px; pointer-events: none; }
.headline h3 { flex: 1; text-align: center; padding-right: 48px; color: #101018; }
.work { flex: 1; min-height: 0; display: flex; }
.editor { padding-left: 3px; flex: none; }
.tools { display: flex; gap: 5px; padding: 4px 0; }
.tools button { width: 23px; height: 24px; display: flex; align-items: center; justify-content: center; border: 1px solid #adb6c4; background: #d5dbe6; }
.tools svg { width: 20px; height: 18px; }
.sheet { position: relative; width: 214px; display: flex; border: 1px solid #333; background: #fff; }
table { width: 200px; flex: none; table-layout: fixed; border-collapse: collapse; color: #2c2c30; }
th, td { height: 16px; padding: 0 0 0 2px; line-height: 12px; text-align: left; border: 1px solid #a8a8a8; border-width: 0 1px 1px 0; font-weight: 400; }
th { height: 14px; padding-left: 6px; }
.d { background: #ff4500; color: #6e2208; }
.cur { background: #0000f8; color: #fff; }
.sheet .vbar b { height: 252px; }
.pointer { position: absolute; left: 158px; top: 121px; width: 9px; height: 14px; }

.chart { flex: 1; display: grid; grid-template: auto auto 1fr auto / 28px 31px 1fr; padding: 5px 67px 4px 12px; color: #12265e; font-weight: 600; line-height: 10px; }
.plot { width: 100%; height: 336px; background: #000; }
.ytitle { align-self: center; text-align: center; padding: 18px 0 0 16px; }
.yaxis { display: flex; flex-direction: column; justify-content: space-between; text-align: right; padding-right: 7px; margin: -2px 0 -4px; }
.gridline { stroke: #777; vector-effect: non-scaling-stroke; fill: none; }
.frame { stroke: #999; }
.yedge { stroke: #e6e640; stroke-width: 2; }
.base, .compare { fill: none; stroke-width: 1.500px; stroke: #4ab04a; }
.compare { stroke: #1414d4; }
.xaxis { grid-column: 3; display: flex; justify-content: space-between; margin: 7px -15px 0; }
.xaxis span { width: 30px; text-align: center; }
.foot { grid-column: 3; position: relative; display: flex; justify-content: center; align-items: center; }
.xtitle { padding-right: 8px; }
.readout { position: absolute; right: -9px; top: 3px; }
.legend { grid-column: 3; display: flex; align-items: center; padding-left: 213px; height: 14px; }
.legend i { width: 12px; height: 1px; background: #4ab04a; margin-right: 36px; }
.legend .k2 { background: #2424c8; margin-left: 32px; }

.lower { height: 159px; flex: none; display: flex; }
.pid { width: 226px; flex: none; margin: 0; padding: 0 5px 5px; border: 1px solid #d9e4f4; min-width: 0; display: flex; flex-direction: column; justify-content: space-between; }
.pid legend { font-weight: 700; padding: 0 2px; margin-left: -3px; }
.line { display: grid; grid-template-columns: 47px 1fr; align-items: center; min-height: 16px; color: #2c3450; }
.line b, .line label { font-weight: 600; color: #16161e; }
.line.four { grid-template-columns: 47px 66px 45px 1fr; }
.line.six { grid-template-columns: 18px 29px 17px 34px 18px 1fr; }
.spin { display: flex; width: 56px; height: 15px; border: 1px solid #99a5b6; background: #fff; }
.spin input { flex: 1; min-width: 0; border: 0; text-align: center; background: none; color: #111; }
.spin svg { width: 10px; height: 12px; background: #f0f0f0; }
.lower textarea { flex: 1; min-width: 0; resize: none; padding: 2px 0 0; outline: 0; overflow: hidden; background: #c9d7ed; border: 1px solid #fff; border-top: 2px solid #808890; border-left-color: #808890; border-radius: 0; color: #2c3548; font: 8px/9px "Liberation Mono", monospace; }

/* status and task bars */
.status { height: 18px; flex: none; display: flex; align-items: center; padding: 0 13px 0 1px; background: linear-gradient(#cfdcf0, #e2ebf8); border-top: 1px solid #e8f0fa; }
.progress { width: 100px; height: 12px; margin-right: 3px; border: 1px solid #c0c8d4; background: #dfe4ec; }
.status b { font-weight: 700; }
.status span, .status button { margin: 0 8px 0 5px; color: #40304c; }
.status button { display: flex; align-items: center; gap: 4px; }
.leds { margin-left: auto; display: flex; gap: 10px; }
.leds svg { width: 16px; height: 16px; }
.taskbar { height: 27px; flex: none; display: flex; background: #020408; color: #eee; }
.start { width: 32px; display: flex; align-items: center; justify-content: center; }
.start svg { width: 12px; height: 12px; }
.search { width: 229px; display: flex; align-items: center; gap: 5px; padding: 0 6px 0 5px; background: #f1f1f1; }
.search svg { width: 16px; height: 16px; }
.search input { flex: 1; min-width: 0; border: 0; background: none; font: 10px Lato, sans-serif; }
.search input::placeholder { color: #444; opacity: 1; }
.apps { width: 393px; display: grid; grid-template-columns: repeat(12, 1fr); }
.apps button { display: flex; align-items: center; justify-content: center; border-bottom: 2px solid transparent; margin: 0 3px; }
.apps svg { width: 16px; height: 16px; }
.apps .run { border-bottom: 2px solid #6aaee8; }
.apps .active { background: #33373c; margin: 0; }
.tray { margin-left: auto; padding-right: 16px; display: flex; align-items: center; gap: 4px; }
.tray svg { width: 12px; height: 12px; }
.tray time { text-align: center; line-height: 12px; width: 40px; margin-right: 6px; }
```
